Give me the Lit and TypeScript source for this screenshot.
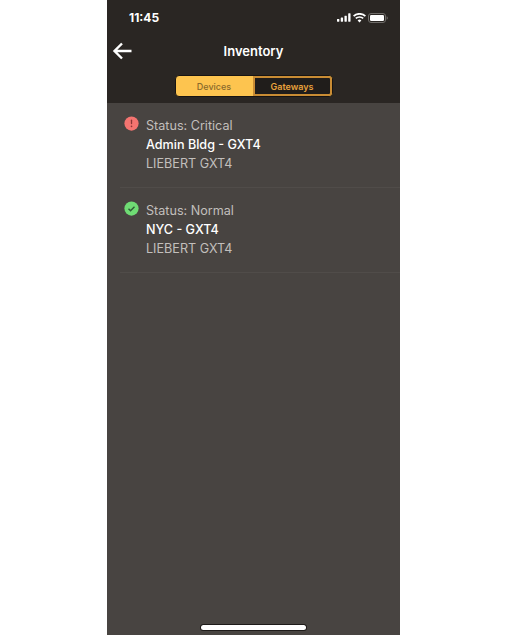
import { LitElement, html, css, svg } from "lit";
import { customElement } from "lit/decorators.js";

@customElement("app-root")
export class AppRoot extends LitElement {
  static styles = css`
    :host { display: block; width: 508px; height: 635px; background: #fff; font-family: Inter, "Liberation Sans", sans-serif; overflow: hidden; }
    .phone { margin-left: 107px; width: 293px; height: 635px; background: #484441; display: flex; flex-direction: column; position: relative; }
    .top { background: #2a2623; height: 103px; display: flex; flex-direction: column; flex: none; }
    .status { height: 35px; display: flex; align-items: center; justify-content: space-between; padding: 0 12px 0 22px; color: #fff; font-size: 12px; font-weight: 700; flex: none; }
    .status .icons { display: flex; align-items: center; gap: 2px; }
    .nav { height: 34px; position: relative; display: flex; align-items: center; justify-content: center; color: #fff; font-size: 13px; font-weight: 600; flex: none; padding-bottom: 2px; box-sizing: border-box; }
    .back { position: absolute; left: 5px; top: 6px; }
    .seg { align-self: center; margin-top: 6px; width: 158px; height: 22px; box-sizing: border-box; border: 1px solid #171412; border-radius: 4px; display: flex; font-size: 9px; font-weight: 500; overflow: hidden; background: #fdc44f; }
    .seg div { display: flex; align-items: center; justify-content: center; box-sizing: border-box; }
    .seg .on { color: #8a6a2c; flex: none; width: 77px; }
    .seg .off { flex: 1; color: #e8a23c; font-weight: 600; background: #201d1b; border: 2px solid #c98c34; border-radius: 0 3px 3px 0; }
    .list { display: flex; flex-direction: column; }
    .row { height: 85px; box-sizing: border-box; margin-left: 13px; padding: 13px 0 0 4px; border-bottom: 1px solid #504c49; display: flex; gap: 7px; }
    .row svg { flex: none; }
    .texts { display: flex; flex-direction: column; font-size: 12.6px; line-height: 19px; color: #c2bfbc; }
    .name { color: #fff; font-weight: 500; }
    .home { position: absolute; left: 94px; bottom: 5px; width: 105px; height: 5px; border-radius: 3px; background: #fff; box-shadow: 0 0 0 1px #1e1b19; }
  `;

  private dot(color: string, inner: unknown) {
    return html`<svg width="15" height="15" viewBox="0 0 16 16"><circle cx="8" cy="8" r="7.6" fill=${color}></circle>${inner}</svg>`;
  }

  render() {
    const alert = svg`<rect x="7.3" y="3.8" width="1.4" height="5" rx=".7" fill="#8a3636"/><circle cx="8" cy="11" r=".9" fill="#8a3636"/>`;
    const check = svg`<path d="M4.8 8.2l2.2 2.2 4.2-4.2" fill="none" stroke="#2f5a35" stroke-width="1.5"/>`;
    return html`
      <div class="phone">
        <div class="top">
          <div class="status">
            <span>11:45</span>
            <div class="icons">
              <svg width="14" height="9" viewBox="0 0 15 9" fill="#fff"><rect x="0" y="6" width="2.5" height="3" rx=".5"/><rect x="4" y="4.5" width="2.5" height="4.5" rx=".5"/><rect x="8" y="2.5" width="2.5" height="6.5" rx=".5"/><rect x="12" y="0" width="2.5" height="9" rx=".5"/></svg>
              <svg width="13" height="10" viewBox="0 0 13 10"><path d="M6.5 9.6L4.6 7.4a3 3 0 0 1 3.8 0zM3.4 6.1L2.2 4.8a6.6 6.6 0 0 1 8.6 0L9.6 6.1a4.8 4.8 0 0 0-6.2 0zM1.2 3.7L0 2.4a9.8 9.8 0 0 1 13 0l-1.2 1.3a8 8 0 0 0-10.6 0z" fill="#fff"/></svg>
              <svg width="20" height="10" viewBox="0 0 20 10"><rect x=".5" y=".5" width="17" height="9" rx="2.5" fill="none" stroke="#6f6c69"/><rect x="2" y="2" width="14" height="6" rx="1.2" fill="#fff"/><path d="M18.6 3.2c.8.3 1.2 1 1.2 1.8s-.4 1.5-1.2 1.8z" fill="#6f6c69"/></svg>
            </div>
          </div>
          <div class="nav">
            <svg class="back" width="21" height="20" viewBox="0 0 21 20"><path d="M19.5 10H3M10 2.5L2.5 10l7.5 7.5" fill="none" stroke="#fff" stroke-width="2.4"/></svg>
            Inventory
          </div>
          <div class="seg"><div class="on">Devices</div><div class="off">Gateways</div></div>
        </div>
        <div class="list">
          <div class="row">
            ${this.dot("#f47470", alert)}
            <div class="texts"><span>Status: Critical</span><span class="name">Admin Bldg - GXT4</span><span>LIEBERT GXT4</span></div>
          </div>
          <div class="row">
            ${this.dot("#6fdc74", check)}
            <div class="texts"><span>Status: Normal</span><span class="name">NYC - GXT4</span><span>LIEBERT GXT4</span></div>
          </div>
        </div>
        <div class="home"></div>
      </div>
    `;
  }
}
